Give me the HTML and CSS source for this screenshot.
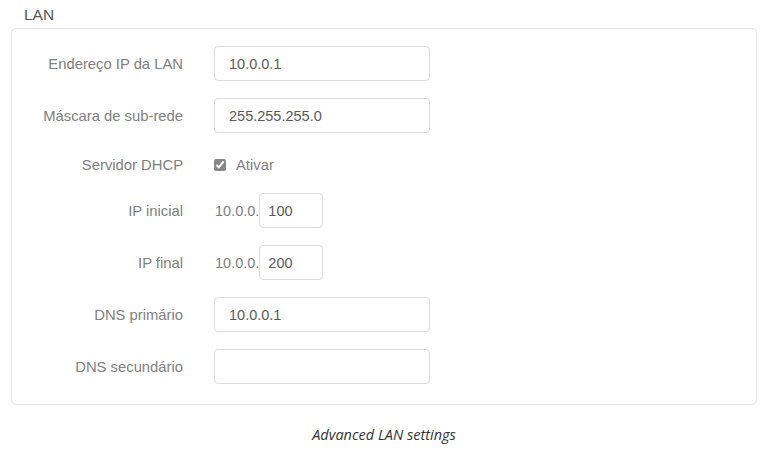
FILE: index.html
```html
<!DOCTYPE html>
<html lang="pt">
<head>
    <meta charset="UTF-8">
    <meta name="viewport" content="width=device-width, initial-scale=1.0">
    <title>LAN</title>
    <link rel="stylesheet" href="styles.css">
</head>
<body>

<h3 class="panel-title">LAN</h3>
<form class="panel" id="lan-form">
    <div class="form-row">
        <label for="lan-ip">Endereço IP da LAN</label>
        <input type="text" id="lan-ip" value="10.0.0.1">
    </div>
    <div class="form-row">
        <label for="lan-mask">Máscara de sub-rede</label>
        <input type="text" id="lan-mask" value="255.255.255.0">
    </div>
    <div class="form-row short">
        <label for="dhcp">Servidor DHCP</label>
        <div class="check">
            <input type="checkbox" id="dhcp" checked>
            <span>Ativar</span>
        </div>
    </div>
    <div class="form-row">
        <label for="ip-start">IP inicial</label>
        <div class="ip-range">
            <span class="prefix">10.0.0.</span>
            <input type="text" id="ip-start" class="small" value="100">
        </div>
    </div>
    <div class="form-row">
        <label for="ip-end">IP final</label>
        <div class="ip-range">
            <span class="prefix">10.0.0.</span>
            <input type="text" id="ip-end" class="small" value="200">
        </div>
    </div>
    <div class="form-row">
        <label for="dns1">DNS primário</label>
        <input type="text" id="dns1" value="10.0.0.1">
    </div>
    <div class="form-row">
        <label for="dns2">DNS secundário</label>
        <input type="text" id="dns2" value="">
    </div>
</form>

<p class="caption">Advanced LAN settings</p>

</body>
</html>
```

FILE: styles.css
```css
body {
    font-family: "Liberation Sans", Arial, sans-serif;
    background-color: #fff;
    margin: 0;
    padding: 0 11px;
}

.panel-title {
    margin: 0;
    padding: 6px 0 0 13px;
    height: 22px;
    font-size: 15.5px;
    font-weight: normal;
    color: #555;
    line-height: 18px;
}

.panel {
    border: 1px solid #e3e3e3;
    border-radius: 5px;
    padding: 17px 0 20px 0;
    display: flex;
    flex-direction: column;
    gap: 17px;
}

.form-row {
    display: grid;
    grid-template-columns: 171px 1fr;
    column-gap: 31px;
    align-items: center;
    height: 35px;
}

.form-row.short {
    box-sizing: border-box;
    height: 26px;
    padding-top: 4px;
}

label {
    text-align: right;
    font-size: 14.8px;
    color: #808080;
}

input[type="text"] {
    box-sizing: border-box;
    width: 216px;
    height: 35px;
    padding: 0 14px;
    border: 1px solid #dcdcdc;
    border-radius: 4px;
    font-family: inherit;
    font-size: 14.5px;
    color: #5a5a5a;
    outline: none;
}

input.small {
    width: 64px;
    padding: 0 8px;
}

.check {
    display: flex;
    align-items: center;
    gap: 10px;
    font-size: 14.8px;
    color: #808080;
}

.check input {
    margin: 0;
    width: 12px;
    height: 12px;
    accent-color: #888;
}

.ip-range {
    display: flex;
    align-items: center;
}

.prefix {
    font-size: 14.5px;
    color: #808080;
    padding-left: 1px;
}

.caption {
    margin: 20px 0 0;
    text-align: center;
    font-family: "Open Sans", sans-serif;
    font-style: italic;
    font-size: 14.5px;
    color: #333;
}
```
